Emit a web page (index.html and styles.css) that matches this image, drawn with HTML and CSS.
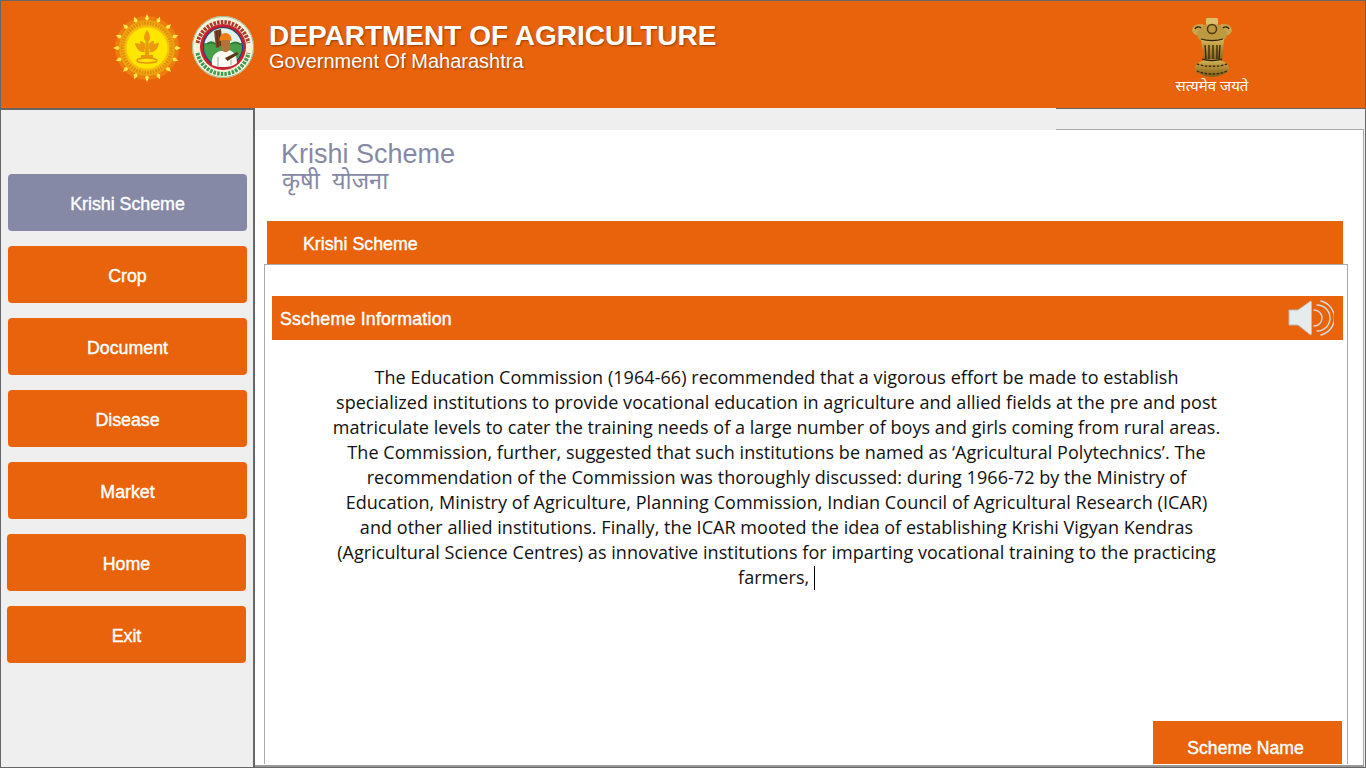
FILE: index.html
```html
<!DOCTYPE html>
<html lang="en">
<head>
  <meta charset="UTF-8" />
  <title>Krishi Scheme</title>
  <link rel="stylesheet" href="styles.css">
</head>
<body>
  <header class="top-bar">
    <svg class="seal" viewBox="0 0 68 68" aria-hidden="true">
      <defs>
        <radialGradient id="sealGlow">
          <stop offset="0.6" stop-color="#ffd800"/>
          <stop offset="0.85" stop-color="#f4ae12"/>
          <stop offset="1" stop-color="#ee9c10"/>
        </radialGradient>
        <filter id="soft"><feGaussianBlur stdDeviation="0.35"/></filter>
      </defs>
      <g filter="url(#soft)">
        <circle cx="34" cy="34" r="32" fill="#f0a010" opacity="0.45"/>
        <g fill="#ffe84a">
          <path id="ray" d="M34 0l2 4.500-2 3-2-3z"/>
          <use href="#ray" transform="rotate(22.500 34 34)"/><use href="#ray" transform="rotate(45 34 34)"/>
          <use href="#ray" transform="rotate(67.500 34 34)"/><use href="#ray" transform="rotate(90 34 34)"/>
          <use href="#ray" transform="rotate(112.500 34 34)"/><use href="#ray" transform="rotate(135 34 34)"/>
          <use href="#ray" transform="rotate(157.500 34 34)"/><use href="#ray" transform="rotate(180 34 34)"/>
          <use href="#ray" transform="rotate(202.500 34 34)"/><use href="#ray" transform="rotate(225 34 34)"/>
          <use href="#ray" transform="rotate(247.500 34 34)"/><use href="#ray" transform="rotate(270 34 34)"/>
          <use href="#ray" transform="rotate(292.500 34 34)"/><use href="#ray" transform="rotate(315 34 34)"/>
          <use href="#ray" transform="rotate(337.500 34 34)"/>
        </g>
        <circle cx="34" cy="34" r="28" fill="url(#sealGlow)"/>
        <circle cx="34" cy="34" r="24.500" fill="none" stroke="#df8f10" stroke-width="3.500" stroke-dasharray="1.600 1.200"/>
        <circle cx="34" cy="34" r="20.500" fill="#ffe600"/>
        <g fill="#ec9a0a">
          <path d="M34 16c2 3 3 5 3 7.500s-1.500 4-3 5c-1.500-1-3-2.500-3-5s1-4.500 3-7.500z"/>
          <path d="M22 29c3 0 6 1 8 3l2 6c-5 1-9-3-10-9z"/>
          <path d="M46 29c-3 0-6 1-8 3l-2 6c5 1 9-3 10-9z"/>
          <path d="M27 27c2 0 4 1 5 3l1 6c-4-1-6-4-6-9z"/>
          <path d="M41 27c-2 0-4 1-5 3l-1 6c4-1 6-4 6-9z"/>
          <path d="M32.500 28h3l.5 13h4v3H28v-3h4z"/>
        </g>
        <ellipse cx="34" cy="46.500" rx="10" ry="2.500" fill="none" stroke="#e8950a" stroke-width="1.500"/>
      </g>
    </svg>

    <svg class="farmer-logo" viewBox="0 0 64 64" aria-hidden="true">
      <g filter="url(#soft)">
        <circle cx="32" cy="32" r="31" fill="#f8f2d8"/>
        <circle cx="32" cy="32" r="30.500" fill="none" stroke="#7fae80" stroke-width="0.800"/>
        <path d="M6.500 28a26 26 0 0 1 51 0" fill="none" stroke="#a83a2c" stroke-width="4" stroke-dasharray="2.500 1.200"/>
        <path d="M6.500 38a26 26 0 0 0 51 0" fill="none" stroke="#3c9a52" stroke-width="4" stroke-dasharray="2.500 1.200"/>
        <circle cx="32" cy="32" r="23" fill="#c6222f"/>
        <circle cx="32" cy="32" r="20" fill="#1f3f8c"/>
        <circle cx="32" cy="32" r="19" fill="#47a04a"/>
        <path d="M13.500 28a19 19 0 0 1 37 0z" fill="#e3f1ec"/>
        <path d="M16 29c3-2 6-2 8 0M40 29c3-2 7-2 10 1" fill="none" stroke="#2d7a34" stroke-width="2"/>
        <path d="M23 16l7-2 2 16-7 3z" fill="#7a4522"/>
        <path d="M25.500 15.500l1.500 17M28 15l1.500 16" stroke="#4d2a12" stroke-width="0.800"/>
        <path d="M21 50c-1-7 2-13 9-14l7-1c6 1 9 6 9 13-4 3-8 4-12 4s-9 0-13-2z" fill="#fbfbf4"/>
        <path d="M30 25h9v7c0 3-2 5-4.500 5S30 35 30 32z" fill="#b5713a"/>
        <path d="M28.500 26c-.5-5 2.500-8 6-8s6.500 3 6 8c-3-1.500-9-1.500-12 0z" fill="#ee7d12"/>
        <path d="M34 43l12-6 1.500 2-11 7z" fill="#5e3319"/>
        <path d="M27 42v9M40 45v5" stroke="#8d8d80" stroke-width="0.800"/>
      </g>
    </svg>

    <div class="dept-title">
      <h1>DEPARTMENT OF AGRICULTURE</h1>
      <p>Government Of Maharashtra</p>
    </div>

    <div class="emblem">
      <svg viewBox="0 0 40 60" aria-hidden="true">
        <defs>
          <linearGradient id="gold" x1="0" y1="0" x2="0" y2="1">
            <stop offset="0" stop-color="#d8b95e"/>
            <stop offset="0.5" stop-color="#ad8831"/>
            <stop offset="1" stop-color="#80601b"/>
          </linearGradient>
        </defs>
        <g filter="url(#soft)">
          <rect x="14" y="1" width="12" height="9" rx="1" fill="#dcc06a"/>
          <ellipse cx="8" cy="13" rx="8" ry="6" fill="#c9a64c"/>
          <ellipse cx="32" cy="13" rx="8" ry="6" fill="#c9a64c"/>
          <ellipse cx="20" cy="17" rx="15" ry="10" fill="#bd9a42"/>
          <path d="M9 22h23l-2 22H12z" fill="url(#gold)"/>
          <ellipse cx="20" cy="51" rx="17" ry="9" fill="url(#gold)"/>
          <circle cx="20" cy="12" r="4.500" fill="none" stroke="#4e3810" stroke-width="1.500"/>
          <g stroke="#33240a" stroke-width="1.300" fill="none">
            <path d="M13 28l1 14M17 28v14M21 28v14M25 28v14M28 28l-1 14"/>
            <path d="M10 42c5 2 15 2 20 0"/>
            <path d="M5 47c8 3 22 3 30 0M5 54c8 4 22 4 30 0" stroke-dasharray="2.500 1.500"/>
            <path d="M3 12c1-2 4-3 6-1M31 11c2-2 5-1 6 1"/>
            <path d="M9 22c6 2 16 2 22 0"/>
          </g>
        </g>
      </svg>
      <span>सत्यमेव जयते</span>
    </div>
  </header>

  <div class="layout">
    <nav class="side-menu">
      <a class="menu-btn active">Krishi Scheme</a>
      <a class="menu-btn">Crop</a>
      <a class="menu-btn">Document</a>
      <a class="menu-btn">Disease</a>
      <a class="menu-btn">Market</a>
      <a class="menu-btn nudged">Home</a>
      <a class="menu-btn nudged">Exit</a>
    </nav>

    <main class="content">
      <div class="page-card">
        <div class="page-title">
          <h2>Krishi Scheme</h2>
          <p>कृषी  योजना</p>
        </div>
        <div class="tab-bar">Krishi Scheme</div>
        <section class="info-box">
          <div class="info-bar">
            <span class="info-label">Sscheme Information</span>
            <svg class="speaker" viewBox="0 0 46 36" aria-hidden="true">
              <path d="M1 10h9L22 1.500c1-.5 1.500 0 1.500 1v31c0 1-.5 1.500-1.500 1L10 25H1z" fill="#e6ebec" stroke="#b9bcbc"/>
              <g fill="none" stroke="#d8dbd9" stroke-width="1.400" stroke-linecap="round">
                <path d="M26 10A8 8 0 0 1 26 26"/>
                <path d="M29 5A13 13 0 0 1 29 31"/>
                <path d="M33 1A17.500 17.500 0 0 1 33 35"/>
              </g>
            </svg>
          </div>
          <p class="info-text">The Education Commission (1964-66) recommended that a vigorous effort be made to establish<br>specialized institutions to provide vocational education in agriculture and allied fields at the pre and post<br>matriculate levels to cater the training needs of a large number of boys and girls coming from rural areas.<br>The Commission, further, suggested that such institutions be named as ‘Agricultural Polytechnics’. The<br>recommendation of the Commission was thoroughly discussed: during 1966-72 by the Ministry of<br>Education, Ministry of Agriculture, Planning Commission, Indian Council of Agricultural Research (ICAR)<br>and other allied institutions. Finally, the ICAR mooted the idea of establishing Krishi Vigyan Kendras<br>(Agricultural Science Centres) as innovative institutions for imparting vocational training to the practicing<br>farmers, <span class="caret"></span></p>
          <div class="info-footer">
            <a class="name-btn">Scheme Name</a>
          </div>
        </section>
      </div>
    </main>
  </div>
</body>
</html>
```
FILE: styles.css
```css
* { box-sizing: border-box; }

html, body {
  height: 100%;
}

body {
  margin: 0;
  height: 768px;
  overflow: hidden;
  display: flex;
  flex-direction: column;
  background: #efefef;
  font-family: 'Liberation Sans', Arial, sans-serif;
  border: 1px solid #666;
}

.top-bar {
  height: 107px;
  flex: none;
  display: flex;
  align-items: flex-start;
  padding: 13px 0 0 112px;
  background: #e8630b;
  color: white;
}

.seal {
  width: 68px;
  height: 68px;
}

.farmer-logo {
  width: 64px;
  height: 64px;
  margin: 1px 0 0 10px;
}

.dept-title {
  margin: 6px 0 0 14px;
  width: 880px;
  text-shadow: 1px 1px 2px rgba(90, 40, 0, 0.6);
}

.dept-title h1 {
  margin: 0;
  font-size: 28px;
  line-height: 32px;
  font-weight: bold;
}

.dept-title p {
  margin: 0;
  font-size: 20px;
  line-height: 18px;
}

.emblem {
  width: 74px;
  margin: 3px 0 0 26px;
  display: flex;
  flex-direction: column;
  align-items: center;
}

.emblem svg {
  width: 40px;
  height: 60px;
}

.emblem span {
  font-size: 15px;
  line-height: 16px;
  white-space: nowrap;
  font-family: 'Noto Sans', 'Liberation Serif', serif;
}

.layout {
  flex: 1;
  min-height: 0;
  display: flex;
}

.side-menu {
  width: 254px;
  flex: none;
  display: flex;
  flex-direction: column;
  gap: 15px;
  padding: 64px 0 0 7px;
  border-top: 2px solid #666;
  border-right: 2px solid #666;
}

.menu-btn,
.tab-bar,
.info-bar,
.name-btn {
  font-size: 17.8px;
  font-weight: normal;
  -webkit-text-stroke: 0.4px white;
}

.menu-btn {
  width: 239px;
  height: 57px;
  padding-top: 3px;
  display: flex;
  align-items: center;
  justify-content: center;
  background: #e8630b;
  color: white;
  border-radius: 4px;
}

.menu-btn.active {
  background: #8589a6;
}

.menu-btn.nudged {
  margin-left: -1px;
}

.content {
  position: relative;
  flex: 1;
  min-width: 0;
  padding: 22px 1px 0 0;
}

/* the rules that only run over the right end of the grey strip */
.content::before,
.content::after {
  content: "";
  position: absolute;
  left: 801px;
  right: 0;
  height: 1px;
}

.content::before {
  top: 0;
  background: #666;
}

.content::after {
  top: 21px;
  right: 1px;
  background: #aaa;
}

.page-card {
  height: 100%;
  display: flex;
  flex-direction: column;
  background: white;
  border-right: 1px solid #aaa;
  border-bottom: 2px solid #999;
}

.page-title {
  height: 91px;
  padding: 10px 0 0 26px;
  color: #8589a6;
}

.page-title h2 {
  margin: 0;
  font-size: 27px;
  line-height: 29px;
  font-weight: normal;
}

.page-title p {
  margin: 0 0 0 1px;
  font-size: 23.5px;
  line-height: 22px;
  white-space: pre;
  font-family: 'Noto Sans', 'Liberation Sans', sans-serif;
}

.tab-bar {
  height: 44px;
  margin: 0 20px 0 12px;
  flex: none;
  padding: 13px 0 0 36px;
  background: #e8630b;
  color: white;
  line-height: 20px;
}

.info-box {
  flex: 1;
  min-height: 0;
  display: flex;
  flex-direction: column;
  margin: -1px 15px 1px 9px;
  padding: 31px 4px 0 7px;
  border: 1px solid #aaa;
  border-bottom: none;
}

.info-bar {
  height: 44px;
  flex: none;
  display: flex;
  align-items: center;
  justify-content: space-between;
  padding: 0 9px 0 8px;
  background: #e8630b;
  color: white;
}

.info-label {
  padding-top: 3px;
  letter-spacing: 0.2px;
}

.speaker {
  width: 46px;
  height: 36px;
}

.info-text {
  flex: 1;
  margin: 25px 0 0;
  padding-right: 62px;
  text-align: center;
  font-family: 'Open Sans', sans-serif;
  font-size: 18px;
  letter-spacing: 0.05px;
  line-height: 25px;
  color: #111;
}

.caret {
  display: inline-block;
  width: 1px;
  height: 24px;
  background: black;
  vertical-align: -6px;
}

.info-footer {
  display: flex;
  justify-content: flex-end;
  padding-right: 1px;
}

.name-btn {
  width: 189px;
  height: 43px;
  padding: 17px 4px 0 0;
  text-align: center;
  background: #e8630b;
  color: white;
  font-size: 17.6px;
  line-height: 20px;
}
```
